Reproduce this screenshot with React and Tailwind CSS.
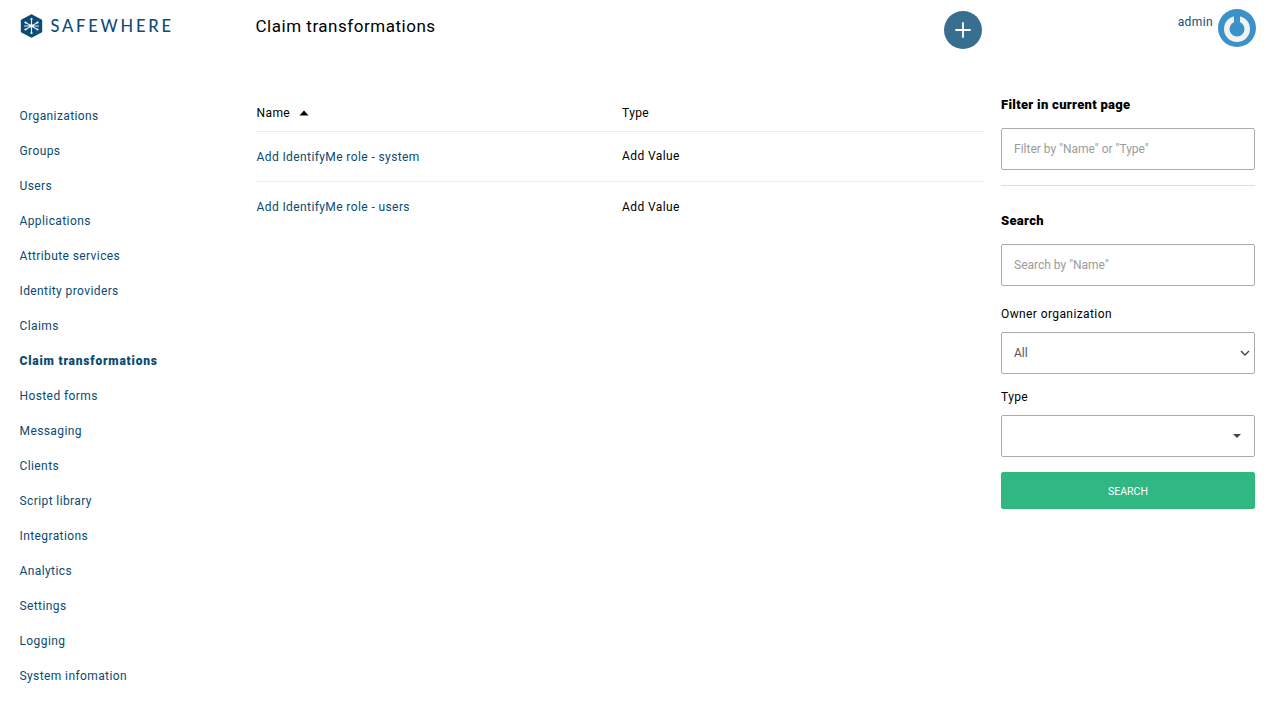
const nav = ["Organizations","Groups","Users","Applications","Attribute services","Identity providers","Claims","Claim transformations","Hosted forms","Messaging","Clients","Script library","Integrations","Analytics","Settings","Logging","System infomation"];

function Logo() {
  return (
    <svg width="23" height="24" viewBox="0 0 23 24" className="shrink-0">
      <path d="M11.5 1.5 L21 6.5 V17.5 L11.5 22.5 L2 17.5 V6.5 Z" fill="#0f4c75" stroke="#0f4c75" strokeWidth="2.4" strokeLinejoin="round" />
      <path d="M11.5 5V19M5.5 8.5L17.5 15.5M17.5 8.5L5.5 15.5M4.5 12H18.5" stroke="#e6f0f6" strokeWidth="1.1" strokeLinecap="round" />
      <g fill="#ffffff">
        <circle cx="11.5" cy="12" r="1.8" />
        <circle cx="11.5" cy="5" r="1.1" />
        <circle cx="11.5" cy="19" r="1.1" />
        <circle cx="5.5" cy="8.5" r="1.1" />
        <circle cx="17.5" cy="8.5" r="1.1" />
        <circle cx="5.5" cy="15.5" r="1.1" />
        <circle cx="17.5" cy="15.5" r="1.1" />
      </g>
    </svg>
  );
}

function Power() {
  return (
    <svg width="38" height="38" viewBox="0 0 38 38" className="shrink-0">
      <circle cx="19" cy="19" r="19" fill="#3a92c8" />
      <circle cx="19" cy="20" r="13" fill="#f2f2f2" />
      <circle cx="19" cy="20" r="7.5" fill="#3a92c8" />
      <path d="M19 4V18" stroke="#3a92c8" strokeWidth="6" strokeLinecap="round" />
    </svg>
  );
}

const inputCls = "h-[42px] w-full rounded-[2px] border border-[#ababab] bg-white px-3 text-xs outline-none placeholder:text-[#9b9b9b]";

export default function App() {
  return (
    <div className="flex h-[703px] w-[1275px] overflow-hidden bg-white text-xs tracking-[0.4px] text-black" style={{ fontFamily: "Roboto, sans-serif" }}>
      <aside className="flex w-[256px] shrink-0 flex-col pl-[19.5px]">
        <div className="mt-[14px] flex h-[24px] items-center gap-[8px]">
          <Logo />
          <span className="pt-[1px] text-[16.5px] leading-none font-medium tracking-[2.8px] text-[#0f4c75]" style={{ fontFamily: "Lato, sans-serif" }}>SAFEWHERE</span>
        </div>
        <nav className="mt-[61px] flex flex-col">
          {nav.map((n) => (
            <a key={n} className={`h-[35px] leading-[35px] text-[#0a4a70] ${n === "Claim transformations" ? "font-black tracking-[0.8px]" : ""}`}>{n}</a>
          ))}
        </nav>
      </aside>

      <main className="flex w-[729px] shrink-0 flex-col">
        <div className="flex h-[94px] shrink-0 items-start justify-between">
          <h1 className="mt-[15px] ml-[-0.5px] text-[17px] leading-[22px] tracking-[0.52px]">Claim transformations</h1>
          <button className="mt-[11px] mr-[3px] flex h-[38px] w-[38px] items-center justify-center rounded-full bg-[#386e90]">
            <svg width="16" height="16" viewBox="0 0 16 16"><path d="M8 1V15M1 8H15" stroke="#fff" strokeWidth="1.8" strokeLinecap="round" /></svg>
          </button>
        </div>
        <div className="flex h-[38px] items-center border-b border-[#ececec] pt-[1px]">
          <div className="flex w-[366px] items-center pl-[0.5px]">
            Name
            <svg width="10" height="6" viewBox="0 0 10 6" className="ml-[9px] mt-[-1px]"><path d="M5 0.5L9.5 5.5H0.5Z" fill="#000" /></svg>
          </div>
          <div>Type</div>
        </div>
        <div className="flex h-[50px] items-center border-b border-[#ececec]">
          <a className="w-[366px] pt-[1px] pl-[0.5px] text-[#0a4a70]">Add IdentifyMe role - system</a>
          <span className="mb-[1px]">Add Value</span>
        </div>
        <div className="flex h-[50px] items-center">
          <a className="w-[366px] pl-[0.5px] text-[#0a4a70]">Add IdentifyMe role - users</a>
          <span>Add Value</span>
        </div>
      </main>

      <aside className="ml-[16px] flex w-[254px] shrink-0 flex-col">
        <div className="mt-[95px] text-[13px] leading-[20px] font-black tracking-[0.3px]">Filter in current page</div>
        <input className={`${inputCls} mt-[13px] tracking-normal`} placeholder={'Filter by "Name" or "Type"'} />
        <div className="mt-[15px] border-t border-[#dcdcdc]" />
        <div className="mt-[25px] text-[13px] leading-[20px] font-black tracking-[0.3px]">Search</div>
        <input className={`${inputCls} mt-[13px] tracking-normal`} placeholder={'Search by "Name"'} />
        <label className="mt-[18px] h-[20px] leading-[20px]">Owner organization</label>
        <div className="mt-[8px] flex h-[42px] items-center justify-between rounded-[2px] border border-[#ababab] pr-[3px] pl-3 tracking-normal text-[#555]">
          All
          <svg width="12" height="12" viewBox="0 0 12 12"><path d="M2 4L6 8L10 4" fill="none" stroke="#444" strokeWidth="1.4" /></svg>
        </div>
        <label className="mt-[13px] h-[20px] leading-[20px]">Type</label>
        <div className="mt-[8px] flex h-[42px] items-center justify-end rounded-[2px] border border-[#ababab] pr-[12px]">
          <svg width="10" height="6" viewBox="0 0 10 6"><path d="M1 1H9L5 5Z" fill="#444" /></svg>
        </div>
        <button className="mt-[15px] h-[37px] rounded-[2px] border border-[#2dbb74] bg-[#30b784] pt-[2px] text-[10.5px] tracking-normal text-white">SEARCH</button>
      </aside>

      <div className="ml-[-77px] flex h-[38px] w-[78px] shrink-0 translate-y-[9px] items-start justify-end gap-[5px] text-[#0f4c75]">
        <span className="mt-[4px] leading-[18px]">admin</span>
        <Power />
      </div>
    </div>
  );
}
